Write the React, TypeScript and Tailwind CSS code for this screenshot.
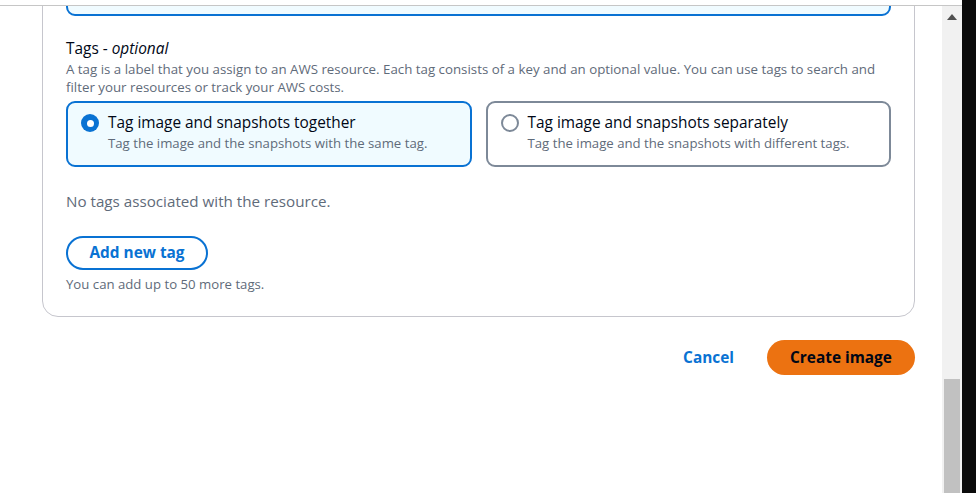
import React from 'react'

function RadioTile({
  selected,
  title,
  desc,
}: {
  selected: boolean
  title: string
  desc: string
}) {
  return (
    <div
      className={
        selected
          ? 'min-w-0 flex-1 basis-0 rounded-[9px] border-2 border-[#0972d3] bg-[#f0fbff] pl-[13px] pr-4 pt-[9px] pb-[13px]'
          : 'min-w-0 flex-1 basis-0 rounded-[9px] border-2 border-[#7d8998] bg-white pl-[13px] pr-4 pt-[9px] pb-[13px]'
      }
    >
      <div className="flex items-start gap-[9px]">
        <div className="mt-[2px] flex h-[18px] w-[18px] shrink-0 items-center justify-center">
          {selected ? (
            <span className="flex h-[18px] w-[18px] items-center justify-center rounded-full bg-[#0972d3]">
              <span className="h-[7px] w-[7px] rounded-full bg-white" />
            </span>
          ) : (
            <span className="h-[18px] w-[18px] rounded-full border-2 border-[#7d8998] bg-white" />
          )}
        </div>
        <div>
          <div className="text-[15.4px] leading-[22px] text-[#000716]">{title}</div>
          <div className="text-[13.2px] leading-[18px] text-[#5f6b7a]">{desc}</div>
        </div>
      </div>
    </div>
  )
}

export default function App() {
  return (
    <div
      className="flex h-[493px] w-[976px] overflow-hidden bg-white"
      style={{ fontFamily: '"Open Sans", "Liberation Sans", Arial, sans-serif' }}
    >
      <div className="flex w-[962px] flex-col">
        <div className="h-[5px] bg-white" />
        <div className="h-px bg-[#c6c6c6]" />
        <div className="flex flex-1 overflow-hidden">
          <main className="w-[942px] overflow-hidden">
            {/* container panel, top is scrolled out of view */}
            <div className="ml-[42px] mt-[-40px] w-[873px] rounded-[16px] border border-[#c6c6cd] bg-white px-[23px] pb-[23px]">
              <div className="h-[49px] rounded-[9px] border-2 border-[#0972d3] bg-[#f0fbff]" />

              <div className="mt-[22px] text-[15.4px] leading-[22px] text-[#000716]">
                Tags - <i>optional</i>
              </div>
              <div className="text-[13.3px] leading-[18px] text-[#5f6b7a]">
                A tag is a label that you assign to an AWS resource. Each tag consists of a key and an optional value. You can use tags to search and
                <br />
                filter your resources or track your AWS costs.
              </div>

              <div className="mt-[5px] flex gap-[14px]">
                <RadioTile
                  selected
                  title="Tag image and snapshots together"
                  desc="Tag the image and the snapshots with the same tag."
                />
                <RadioTile
                  selected={false}
                  title="Tag image and snapshots separately"
                  desc="Tag the image and the snapshots with different tags."
                />
              </div>

              <div className="mt-[23px] text-[15.2px] leading-[22px] text-[#5f6b7a]">
                No tags associated with the resource.
              </div>

              <button
                type="button"
                className="mt-[24px] h-[34px] w-[142px] rounded-full border-2 border-[#0972d3] bg-white text-[15.4px] font-bold text-[#0972d3]"
              >
                Add new tag
              </button>
              <div className="mt-[5px] text-[13.2px] leading-[18px] text-[#5f6b7a]">
                You can add up to 50 more tags.
              </div>
            </div>

            <div className="mr-[27px] mt-[23px] flex items-center justify-end gap-[33px]">
              <button type="button" className="text-[15.4px] font-bold text-[#0972d3]">
                Cancel
              </button>
              <button
                type="button"
                className="h-[35px] w-[148px] rounded-full bg-[#ec7211] text-[15.4px] font-bold text-[#000716]"
              >
                Create image
              </button>
            </div>
          </main>

          {/* scrollbar */}
          <div className="relative flex w-[20px] flex-col bg-[#f1f1f1]">
            <div className="flex h-[22px] items-center justify-center">
              <svg width="10" height="6" viewBox="0 0 10 6">
                <path d="M5 0 L10 6 L0 6 Z" fill="#505050" />
              </svg>
            </div>
            <div className="flex-1" />
            <div className="mx-[2px] h-[114px] bg-[#c1c1c1]" />
          </div>
        </div>
      </div>
      <div className="w-[14px] bg-[#0b0b0b]" />
    </div>
  )
}
